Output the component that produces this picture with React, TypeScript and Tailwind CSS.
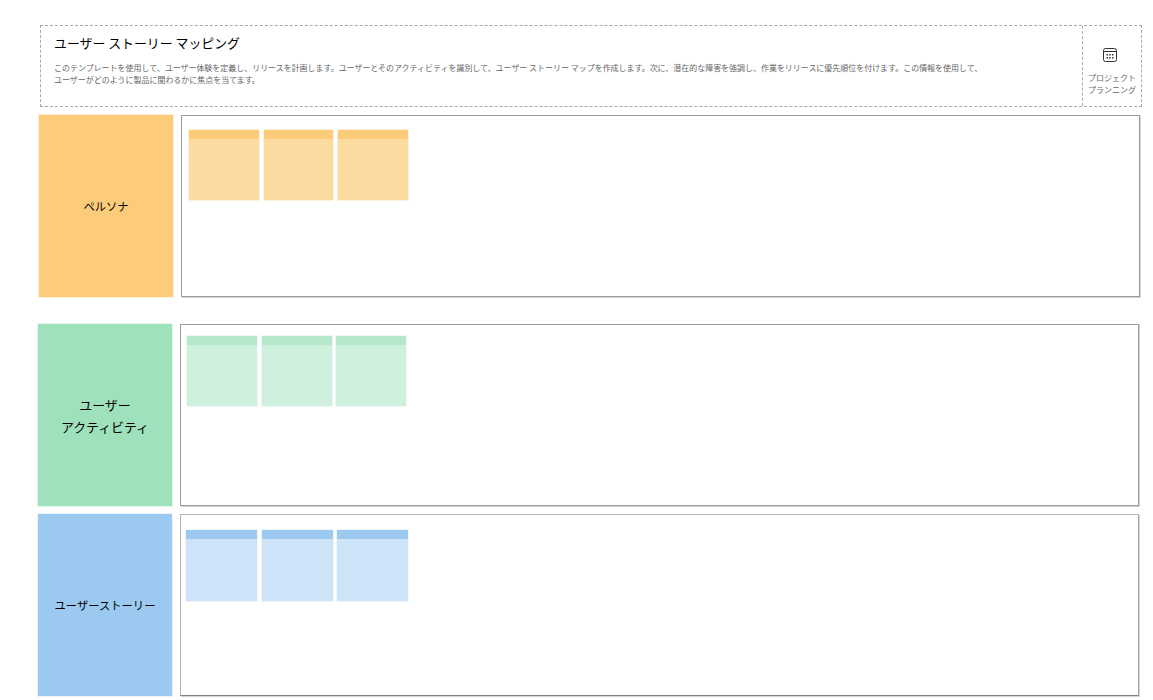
const FONT = "font-['Noto_Sans_CJK_JP','Liberation_Sans',sans-serif]";

type Row = {
  label: string[];
  labelBg: string;
  labelRing: string;
  labelText: string;
  headBg: string;
  noteBg: string;
  noteBorder: string;
  noteSize: string;
  boxBorder: string;
  margin: string;
  pad: string;
  gaps: string[];
};

const rows: Row[] = [
  {
    label: ["ペルソナ"],
    labelBg: "bg-[#fdcc7a]",
    labelRing: "ring-[#fdf0dc]",
    labelText: "text-[11.3px]",
    headBg: "bg-[#fdcc7a]",
    noteBg: "bg-[#fcdba0]",
    noteBorder: "border-[#fdf0dc]",
    noteSize: "h-[72px] w-[71.5px]",
    boxBorder: "border-[#9c9c9c]",
    margin: "ml-[39px] mt-[8px]",
    pad: "pl-[6px] pt-[13px]",
    gaps: ["w-[3px]", "w-[3px]"],
  },
  {
    label: ["ユーザー", "アクティビティ"],
    labelBg: "bg-[#9fe1bb]",
    labelRing: "ring-[#e6f7ed]",
    labelText: "text-[12.9px] pt-[1px]",
    headBg: "bg-[#b5e8cb]",
    noteBg: "bg-[#cff0dd]",
    noteBorder: "border-[#ecf8f1]",
    noteSize: "h-[72px] w-[71.5px]",
    boxBorder: "border-[#9c9c9c]",
    margin: "ml-[38px] mt-[27px]",
    pad: "pl-[5px] pt-[10px]",
    gaps: ["w-[3.5px]", "w-[2.5px]"],
  },
  {
    label: ["ユーザーストーリー"],
    labelBg: "bg-[#9bc9f0]",
    labelRing: "ring-[#eaf4fc]",
    labelText: "text-[11.3px]",
    headBg: "bg-[#9bc9f0]",
    noteBg: "bg-[#cde3f7]",
    noteBorder: "border-[#eef5fc]",
    noteSize: "h-[73px] w-[73px]",
    boxBorder: "border-[#b4b4b4] border-r-[#a8a8a8] border-b-[#808080]",
    margin: "ml-[38px] mt-[8px]",
    pad: "pl-[4px] pt-[14px]",
    gaps: ["w-[3px]", "w-[2px]"],
  },
];

function CalendarIcon() {
  return (
    <svg width="14" height="14" viewBox="0 0 14 14" fill="none" className="mr-[4px]">
      <rect x="0.5" y="0.5" width="13" height="13" rx="2" stroke="#333333" />
      <path d="M1 3.5H13" stroke="#333333" />
      <g fill="#333333">
        <rect x="3.5" y="6" width="1.5" height="1.5" />
        <rect x="6.25" y="6" width="1.5" height="1.5" />
        <rect x="9" y="6" width="1.5" height="1.5" />
        <rect x="3.5" y="9" width="1.5" height="1.5" />
        <rect x="6.25" y="9" width="1.5" height="1.5" />
        <rect x="9" y="9" width="1.5" height="1.5" />
      </g>
    </svg>
  );
}

function Note({ row }: { row: Row }) {
  return (
    <div className={`flex flex-col rounded-[2px] border ${row.noteSize} ${row.noteBorder} ${row.noteBg}`}>
      <div className={`h-[9px] ${row.headBg}`} />
    </div>
  );
}

function MapRow({ row }: { row: Row }) {
  return (
    <div className={`flex h-[182px] w-[1102px] ${row.margin}`}>
      <div className={`flex w-[134px] flex-col items-center justify-center ring-1 ${row.labelRing} ${row.labelBg}`}>
        {row.label.map((line) => (
          <div key={line} className={`leading-[21px] text-black ${row.labelText}`}>
            {line}
          </div>
        ))}
      </div>
      <div className={`ml-[8px] flex h-full w-[959px] items-start border bg-white shadow-[1px_1px_0_#d4d4d4] ${row.boxBorder} ${row.pad}`}>
        <Note row={row} />
        <div className={row.gaps[0]} />
        <Note row={row} />
        <div className={row.gaps[1]} />
        <Note row={row} />
      </div>
    </div>
  );
}

export default function App() {
  return (
    <div className={`h-[700px] w-[1153px] overflow-hidden bg-white pt-[25px] ${FONT}`}>
      {/* ヘッダー */}
      <div className="ml-[40px] flex h-[82px] w-[1102px] border border-dashed border-[#a8a8a8]">
        <div className="w-[1041px] pl-[13px] pt-[7px]">
          <div className="text-[12.9px] leading-[20px] text-black">ユーザー ストーリー マッピング</div>
          <p className="mt-[9px] text-[7.97px] leading-[12px] text-[#666666]">
            このテンプレートを使用して、ユーザー体験を定義し、リリースを計画します。ユーザーとそのアクティビティを識別して、ユーザー ストーリー マップを作成します。次に、潜在的な障害を強調し、作業をリリースに優先順位を付けます。この情報を使用して、
            <br />
            ユーザーがどのように製品に関わるかに焦点を当てます。
          </p>
        </div>
        <div className="flex flex-1 flex-col items-center border-l border-dashed border-[#a8a8a8] pt-[22px]">
          <CalendarIcon />
          <div className="mt-[10px] text-center text-[8px] leading-[12px] text-[#666666]">
            プロジェクト
            <br />
            プランニング
          </div>
        </div>
      </div>

      {rows.map((row) => (
        <MapRow key={row.label[0]} row={row} />
      ))}
    </div>
  );
}
